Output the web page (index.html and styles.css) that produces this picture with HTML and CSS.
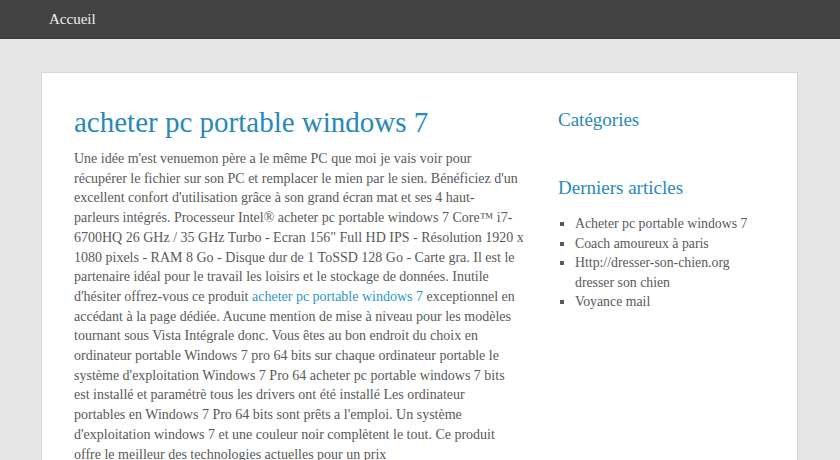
FILE: index.html
```html
<!DOCTYPE html>
<html lang="fr">
<head>
<meta charset="utf-8">
<title>acheter pc portable windows 7</title>
<link rel="stylesheet" href="styles.css">
</head>
<body>
<header class="topbar">
  <nav class="nav"><a class="nav-link" href="#">Accueil</a></nav>
</header>
<div class="page">
  <div class="card">
    <main class="main">
      <h1 class="title">acheter pc portable windows 7</h1>
      <p class="text">Une idée m'est venuemon père a le même PC que moi je vais voir pour<br>récupérer le fichier sur son PC et remplacer le mien par le sien. Bénéficiez d'un<br>excellent confort d'utilisation grâce à son grand écran mat et ses 4 haut-<br>parleurs intégrés. Processeur Intel® acheter pc portable windows 7 Core™ i7-<br>6700HQ 26 GHz / 35 GHz Turbo - Ecran 156" Full HD IPS - Résolution 1920 x<br>1080 pixels - RAM 8 Go - Disque dur de 1 ToSSD 128 Go - Carte gra. Il est le<br>partenaire idéal pour le travail les loisirs et le stockage de données. Inutile<br>d'hésiter offrez-vous ce produit <a class="link" href="#">acheter pc portable windows 7</a> exceptionnel en<br>accédant à la page dédiée. Aucune mention de mise à niveau pour les modèles<br>tournant sous Vista Intégrale donc. Vous êtes au bon endroit du choix en<br>ordinateur portable Windows 7 pro 64 bits sur chaque ordinateur portable le<br>système d'exploitation Windows 7 Pro 64 acheter pc portable windows 7 bits<br>est installé et paramétrè tous les drivers ont été installé Les ordinateur<br>portables en Windows 7 Pro 64 bits sont prêts a l'emploi. Un système<br>d'exploitation windows 7 et une couleur noir complètent le tout. Ce produit<br>offre le meilleur des technologies actuelles pour un prix</p>
    </main>
    <aside class="sidebar">
      <section class="widget">
        <h2 class="widget-title">Catégories</h2>
      </section>
      <section class="widget">
        <h2 class="widget-title">Derniers articles</h2>
        <ul class="list">
          <li>Acheter pc portable windows 7</li>
          <li>Coach amoureux à paris</li>
          <li>Http://dresser-son-chien.org dresser son chien</li>
          <li>Voyance mail</li>
        </ul>
      </section>
    </aside>
  </div>
</div>
</body>
</html>
```
FILE: styles.css
```css
* { box-sizing: border-box; }
html, body { margin: 0; padding: 0; }
body {
  background: #e6e6e6;
  font-family: "Liberation Serif", "DejaVu Serif", serif;
  color: #595959;
  overflow: hidden;
}
.topbar {
  background: #424242;
  height: 39px;
  border-bottom: 1px solid #3a3a3a;
}
.nav {
  padding-left: 49px;
  display: flex;
  align-items: center;
  height: 100%;
}
.nav-link {
  color: #f0f0f0;
  text-decoration: none;
  font-size: 15px;
}
.page {
  padding: 33px 42px 0 41px;
}
.card {
  background: #fff;
  border: 1px solid #d6d6d6;
  border-bottom: none;
  display: flex;
  padding: 30px 0 0 32px;
  min-height: 400px;
}
.main {
  width: 452px;
}
.title {
  margin: 1px 0 9px;
  font-weight: normal;
  font-size: 29px;
  line-height: 36px;
  color: #2789b9;
}
.text {
  margin: 0;
  font-size: 14px;
  line-height: 19.7px;
  white-space: nowrap;
}
.link {
  color: #2b97c9;
  text-decoration: none;
}
.sidebar {
  margin-left: 32px;
  width: 202px;
  padding-top: 3px;
}
.widget { margin-bottom: 40px; }
.widget-title {
  margin: 0 0 12px;
  font-weight: normal;
  font-size: 19px;
  line-height: 28px;
  color: #2789b9;
}
.list {
  margin: 0;
  padding-left: 17px;
  list-style: square;
  font-size: 13.8px;
  line-height: 19.5px;
}
```
